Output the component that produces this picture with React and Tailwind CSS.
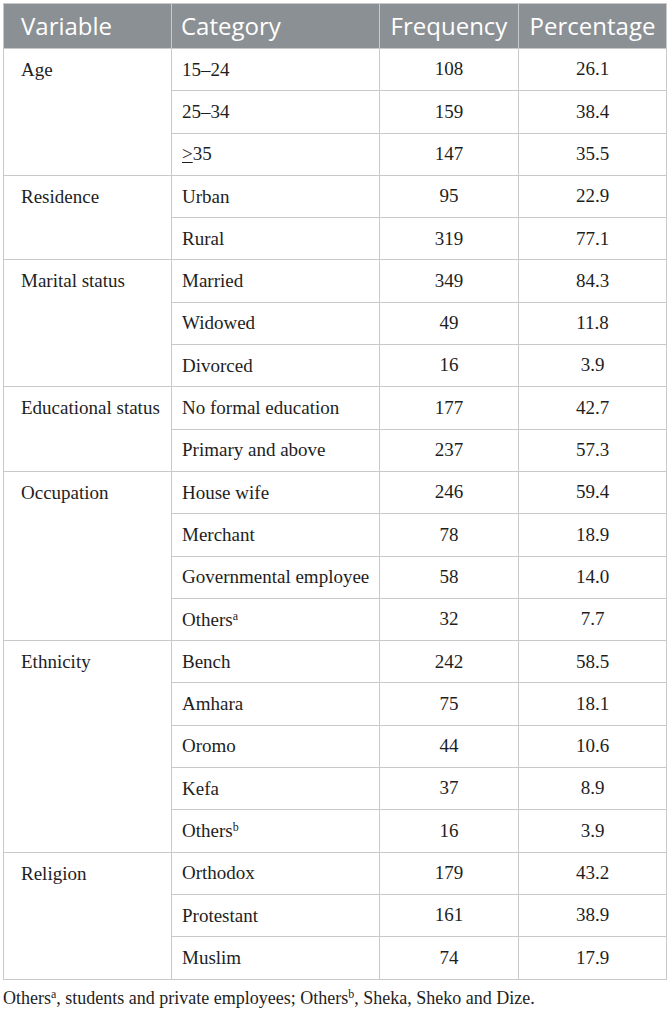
import React from "react";

const groups = [
  {
    name: "Age",
    rows: [
      ["15–24", "108", "26.1"],
      ["25–34", "159", "38.4"],
      [<span key="g"><span className="underline underline-offset-[2px]">&gt;</span>35</span>, "147", "35.5"],
    ],
  },
  {
    name: "Residence",
    rows: [
      ["Urban", "95", "22.9"],
      ["Rural", "319", "77.1"],
    ],
  },
  {
    name: "Marital status",
    rows: [
      ["Married", "349", "84.3"],
      ["Widowed", "49", "11.8"],
      ["Divorced", "16", "3.9"],
    ],
  },
  {
    name: "Educational status",
    rows: [
      ["No formal education", "177", "42.7"],
      ["Primary and above", "237", "57.3"],
    ],
  },
  {
    name: "Occupation",
    rows: [
      ["House wife", "246", "59.4"],
      ["Merchant", "78", "18.9"],
      ["Governmental employee", "58", "14.0"],
      [<span key="a">Others<sup className="text-[12px]">a</sup></span>, "32", "7.7"],
    ],
  },
  {
    name: "Ethnicity",
    rows: [
      ["Bench", "242", "58.5"],
      ["Amhara", "75", "18.1"],
      ["Oromo", "44", "10.6"],
      ["Kefa", "37", "8.9"],
      [<span key="b">Others<sup className="text-[12px]">b</sup></span>, "16", "3.9"],
    ],
  },
  {
    name: "Religion",
    rows: [
      ["Orthodox", "179", "43.2"],
      ["Protestant", "161", "38.9"],
      ["Muslim", "74", "17.9"],
    ],
  },
];

function App() {
  return (
    <div className="w-[670px] h-[1013px] bg-white pt-[3px] pl-[3px] text-[#1e1e1e]">
      <table className="border-collapse table-fixed w-[663px] text-[19px] font-['Liberation_Serif',serif]">
        <colgroup>
          <col className="w-[168px]" />
          <col className="w-[208px]" />
          <col className="w-[139px]" />
          <col className="w-[148px]" />
        </colgroup>
        <thead>
          <tr className="h-[45px] bg-[#8b9094] text-white text-[24px] font-['Open_Sans',sans-serif]">
            <th className="border border-[#c9c9c9] text-left font-normal pl-[17px]">Variable</th>
            <th className="border border-[#c9c9c9] text-left font-normal pl-[9px]">Category</th>
            <th className="border border-[#c9c9c9] text-center font-normal">Frequency</th>
            <th className="border border-[#c9c9c9] text-center font-normal">Percentage</th>
          </tr>
        </thead>
        <tbody>
          {groups.map((g) =>
            g.rows.map((r, i) => (
              <tr key={g.name + i} className="h-[42.3px]">
                {i === 0 && (
                  <td
                    rowSpan={g.rows.length}
                    className="border border-[#c9c9c9] align-top pl-[17px] pt-[8px] leading-[26px]"
                  >
                    {g.name}
                  </td>
                )}
                <td className="border border-[#c9c9c9] pl-[10px] leading-[26px]">{r[0]}</td>
                <td className="border border-[#c9c9c9] text-center">{r[1]}</td>
                <td className="border border-[#c9c9c9] text-center">{r[2]}</td>
              </tr>
            ))
          )}
        </tbody>
      </table>
      <p className="mt-[6px] text-[18px] leading-[24px] font-['Liberation_Serif',serif]">
        Others<sup className="text-[12px]">a</sup>, students and private employees; Others
        <sup className="text-[12px]">b</sup>, Sheka, Sheko and Dize.
      </p>
    </div>
  );
}

export default App;
